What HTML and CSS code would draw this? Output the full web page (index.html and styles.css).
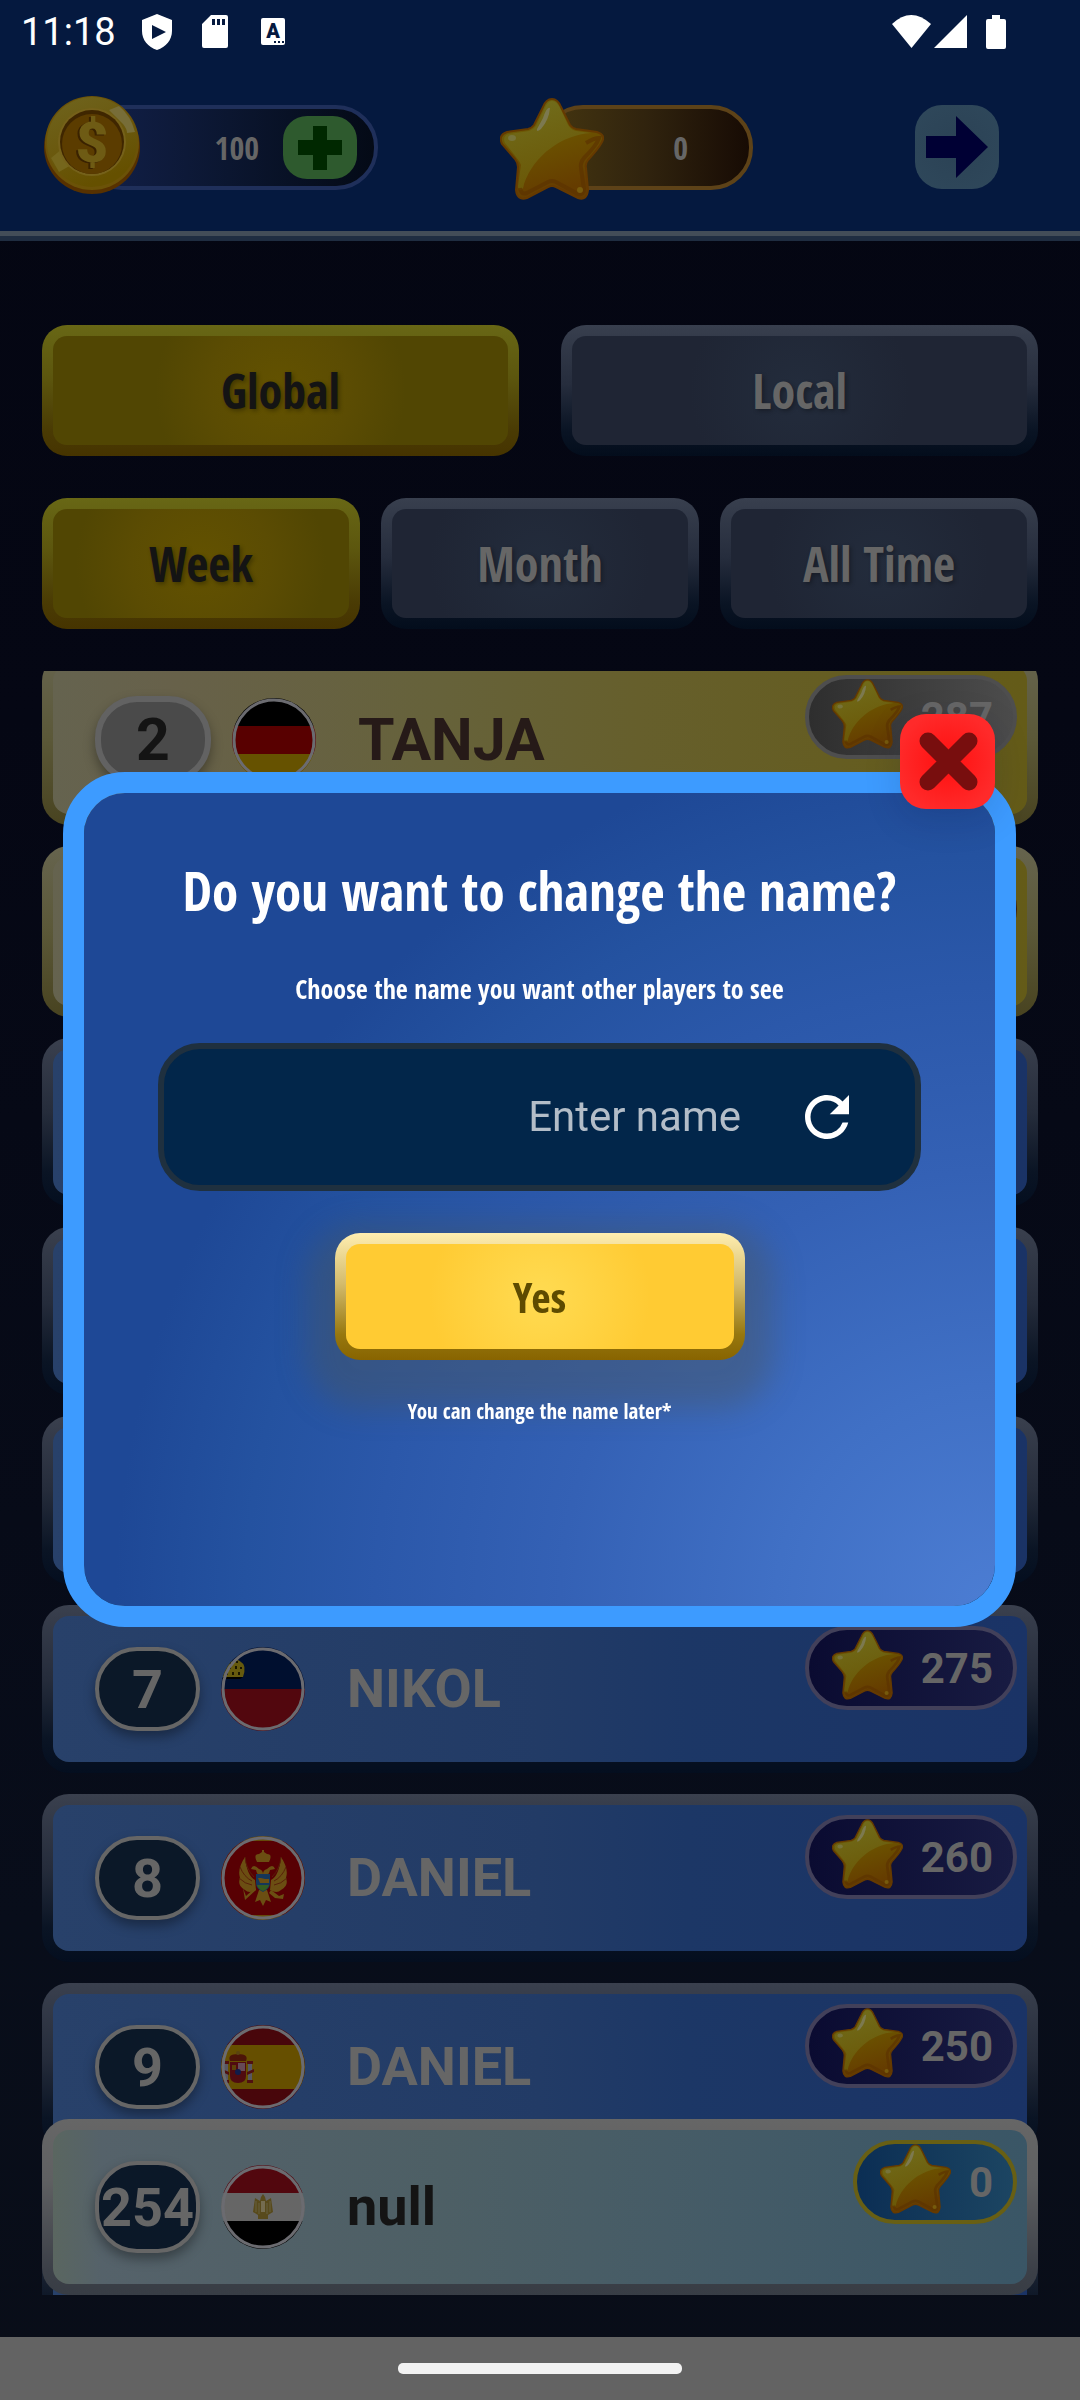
FILE: index.html
```html
<!DOCTYPE html>
<html lang="en">
<head>
<meta charset="utf-8">
<meta name="viewport" content="width=device-width, initial-scale=1">
<title>Leaderboard</title>
<link rel="stylesheet" href="styles.css">
</head>
<body>
<svg class="defs" width="0" height="0" aria-hidden="true">
  <defs>
    <linearGradient id="starBase" x1="0" y1="0" x2="0.3" y2="1">
      <stop offset="0" stop-color="#6e6812"/><stop offset="0.5" stop-color="#6b5200"/><stop offset="1" stop-color="#653c00"/>
    </linearGradient>
    <linearGradient id="starLight" x1="0.2" y1="0" x2="0.5" y2="1">
      <stop offset="0" stop-color="#716d1c"/><stop offset="1" stop-color="#6a5605"/>
    </linearGradient>
    <linearGradient id="coinRim" x1="0" y1="0" x2="0.4" y2="1">
      <stop offset="0" stop-color="#6f641e"/><stop offset="0.5" stop-color="#6b5a10"/><stop offset="1" stop-color="#655000"/>
    </linearGradient>
    <clipPath id="round"><circle cx="42" cy="42" r="42"/></clipPath>
    <symbol id="star" viewBox="0 0 104 102">
      <path d="M52 1C56 1 59 4 61 9L70 27Q72 30 76 31L97 34Q106 37 102 44Q99 50 88 62Q85 66 86 70L88 92Q87 103 78 100L56 89Q52 87 48 89L27 100Q17 103 16 92L18 69Q18 65 15 61L2 46Q-2 37 7 34L28 31Q32 30 34 27L43 9Q46 1 52 1Z" fill="url(#starBase)" stroke="#653900" stroke-width="2"/>
      <path d="M52 3C55 3 58 6 60 10L68 27Q71 32 76 33L91 35C62 37 34 57 24 86Q23 93 20 92Q18 92 18 88L21 67Q20 64 16 59L5 45Q2 38 9 36L29 33Q33 32 36 28L45 10Q48 3 52 3Z" fill="url(#starLight)"/>
      <path d="M86 45Q94 40 99 40Q97 47 84 60Q80 65 81 70L84 91Q84 97 78 96L56 84Q52 82 48 84L27 95Q21 97 20 90" fill="none" stroke="#5d3300" stroke-width="4" opacity="0.7"/>
      <path d="M50 10Q47 8 43 20L37 31Q36 35 41 31Q49 22 50 10Z" fill="#7c7950"/>
      <ellipse cx="12" cy="40" rx="4" ry="3" fill="#77733a"/>
      <circle cx="80" cy="92" r="3" fill="#765a0c"/>
    </symbol>
  </defs>
</svg>

<header class="top">
  <div class="status">
    <span class="clock">11:18</span>
    <svg class="status-shield" width="30" height="36" viewBox="0 0 30 36"><path fill="#fff" fill-rule="evenodd" d="M15 0L30 6V17C30 26 24 33 15 36C6 33 0 26 0 17V6ZM10 11V25L24 18Z"/></svg>
    <svg class="status-card" width="26" height="33" viewBox="0 0 26 33"><path fill="#fff" fill-rule="evenodd" d="M9 0H24Q26 0 26 2V31Q26 33 24 33H2Q0 33 0 31V9ZM10 4V10H13V4ZM15 4V10H18V4ZM20 4V10H23V4Z"/></svg>
    <svg class="status-a" width="24" height="27" viewBox="0 0 24 27"><rect width="24" height="27" rx="2" fill="#fff"/><text x="12" y="20" text-anchor="middle" class="glyph-a">A</text><path d="M13 23h2v2h-2zM17 23h2v2h-2zM21 23h2v2h-2z" fill="#05193f"/></svg>
    <svg class="status-right" width="114" height="34" viewBox="0 0 114 34" fill="#fff"><path d="M0 9Q19 -9 39 9L19.500 33Z"/><path d="M75 0V33H42Z"/><path d="M100 0h8v4h4q2 0 2 2v26q0 2-2 2h-16q-2 0-2-2V6q0-2 2-2h4z"/></svg>
  </div>
  <div class="hud">
    <div class="meter coins">
      <svg class="coin" width="98" height="98" viewBox="0 0 98 98">
        <ellipse cx="49" cy="51" rx="48" ry="47" fill="#573100"/>
        <circle cx="49" cy="47" r="47" fill="#6b5208"/>
        <circle cx="49" cy="46" r="45" fill="url(#coinRim)"/>
        <path d="M66 14L80 28Q84 33 84 37L92 36Q88 20 76 10Z" fill="#776d38"/>
        <path d="M8 62L16 76L30 68L20 52Z" fill="#75661c"/>
        <circle cx="49" cy="46" r="34" fill="#75611a"/>
        <circle cx="49" cy="46" r="32" fill="#3f2600"/>
        <circle cx="49" cy="48" r="30" fill="#5b3c00"/>
        <text x="47" y="67" text-anchor="middle" class="dollar-shade">$</text>
        <text x="49" y="66" text-anchor="middle" class="dollar">$</text>
      </svg>
      <span class="meter-value">100</span>
      <button class="add" type="button" aria-label="Add coins"><svg width="46" height="46" viewBox="0 0 46 46"><path d="M16 1h14v14h15v15H30v15H16V30H1V15h15z" fill="#002800"/></svg></button>
    </div>
    <div class="meter stars">
      <svg class="big-star" width="104" height="102"><use href="#star"/></svg>
      <span class="meter-value">0</span>
    </div>
    <button class="next" type="button" aria-label="Next"><svg width="62" height="62" viewBox="0 0 62 62"><path d="M0 20H30V0L62 31L30 62V42H0Z" fill="#000034"/></svg></button>
  </div>
</header>

<main class="board">
  <div class="tabs scope">
    <button class="tab active" type="button">Global</button>
    <button class="tab" type="button">Local</button>
  </div>
  <div class="tabs period">
    <button class="tab active" type="button">Week</button>
    <button class="tab" type="button">Month</button>
    <button class="tab" type="button">All Time</button>
  </div>

  <div class="ranking">
    <ol class="rows">
      <li class="row medal silver">
        <span class="rank">2</span>
        <svg class="flag" viewBox="0 0 84 84"><g clip-path="url(#round)"><rect width="84" height="28" fill="#000"/><rect y="28" width="84" height="28" fill="#580000"/><rect y="56" width="84" height="28" fill="#665200"/></g><circle class="ring" cx="42" cy="42" r="40"/></svg>
        <span class="name">TANJA</span>
        <span class="score"><svg class="mini-star"><use href="#star"/></svg>287</span>
      </li>
      <li class="row medal bronze"><span class="rank"></span><span class="score"></span></li>
      <li class="row"><span class="rank"></span></li>
      <li class="row"><span class="rank"></span></li>
      <li class="row"><span class="rank"></span></li>
      <li class="row">
        <span class="rank">7</span>
        <svg class="flag" viewBox="0 0 84 84"><g clip-path="url(#round)"><rect width="84" height="42" fill="#000f2f"/><rect y="42" width="84" height="42" fill="#52070e"/><path d="M0 18Q6 12 12 15Q16 11 20 15Q26 18 22 30H0Z" fill="#665a0e"/><path d="M3 20v2M9 19v3M15 19v3M20 20v2M6 25v3M12 25v3M18 25v3M9 15v2M16 14v2" stroke="#1a1600" stroke-width="2"/><path d="M0 30h22l-3 2H0z" fill="#000"/></g><circle class="ring" cx="42" cy="42" r="40"/></svg>
        <span class="name">NIKOL</span>
        <span class="score"><svg class="mini-star"><use href="#star"/></svg>275</span>
      </li>
      <li class="row">
        <span class="rank">8</span>
        <svg class="flag" viewBox="0 0 84 84"><g clip-path="url(#round)"><rect width="84" height="84" fill="#664a0a"/><rect y="5" width="84" height="74" fill="#580003"/>
          <g fill="#6b4e12"><path d="M36 26q-4-8 2-8l3-2v-2h2v2l3 2q6 0 2 8z"/><path d="M38 33q-6-6-8 0l5 1q1 6 7 6q6 0 7-6l5-1q-2-6-8 0q-4 1-4 5q0-4-4-5z"/><path d="M34 44Q26 40 24 21Q16 33 19 42Q16 50 24 54Q28 58 35 54ZM50 44Q58 40 60 21Q68 33 65 42Q68 50 60 54Q56 58 49 54Z"/><path d="M35 54L24 64L22 52L25 60L34 52ZM50 54L58 60L63 58L62 63L54 62L48 57Z"/><path d="M38 54h8l4 12l-5-2l-3 6l-3-6l-5 2z"/></g>
          <path d="M24 21q1 12 9 20M19 31q4 10 12 14M18 42q6 6 13 7M60 21q-1 12-9 20M65 31q-4 10-12 14M66 42q-6 6-13 7" stroke="#58200a" fill="none"/>
          <path d="M35 38h14v9q0 6-7 9q-7-3-7-9z" fill="#15365a"/><path d="M36 49h12q-1 4-6 6q-5-2-6-6z" fill="#345c20"/><path d="M37 42h3l4 1h4v4h-9z" fill="#6b4e12"/></g><circle class="ring" cx="42" cy="42" r="40"/></svg>
        <span class="name">DANIEL</span>
        <span class="score"><svg class="mini-star"><use href="#star"/></svg>260</span>
      </li>
      <li class="row">
        <span class="rank">9</span>
        <svg class="flag" viewBox="0 0 84 84"><g clip-path="url(#round)"><rect width="84" height="84" fill="#48060b"/><rect y="20" width="84" height="44" fill="#664f00"/><path d="M9 36q-3-7 8-7q11 0 8 7z" fill="#4c1408"/><circle cx="17" cy="28" r="2" fill="#5a4410"/><rect x="3" y="39" width="4" height="18" fill="#585862"/><rect x="27" y="39" width="4" height="18" fill="#585862"/><path d="M2 36h6v3H2zM26 36h6v3h-6zM1 44l7 3v3l-7-3zM33 44l-7 3v3l7-3zM2 55h6v3H2zM26 55h6v3h-6z" fill="#501010"/><path d="M9 37h16v14q0 7-8 7q-8 0-8-7z" fill="#500b10"/><rect x="17" y="38" width="7" height="8" fill="#664a56"/><rect x="11" y="40" width="4" height="5" fill="#5c4008"/><circle cx="17" cy="47" r="3" fill="#101c4a"/></g><circle class="ring" cx="42" cy="42" r="40"/></svg>
        <span class="name">DANIEL</span>
        <span class="score"><svg class="mini-star"><use href="#star"/></svg>250</span>
      </li>
      <li class="row"><span class="rank"></span></li>
    </ol>
    <div class="row own">
      <span class="rank">254</span>
      <svg class="flag" viewBox="0 0 84 84"><g clip-path="url(#round)"><rect width="84" height="28" fill="#52070e"/><rect y="28" width="84" height="28" fill="#666"/><rect y="56" width="84" height="28" fill="#000"/><path d="M34 33l5 3l1-4l2-3l2 3l1 4l5-3l2 14l-5 3v4H37v-4l-5-3z" fill="#584a1c"/><path d="M40 36h4v11h-4z" fill="#746c50"/><path d="M35 36v11M38 38v11M46 38v11M49 36v11" stroke="#666040"/></g><circle class="ring" cx="42" cy="42" r="40"/></svg>
      <span class="name">null</span>
      <span class="score"><svg class="mini-star"><use href="#star"/></svg>0</span>
    </div>
  </div>
</main>

<footer class="system-nav"><span class="handle"></span></footer>

<div class="backdrop">
  <form class="dialog" role="dialog" aria-labelledby="dialog-title">
    <button class="close" type="button" aria-label="Close"><svg width="60" height="60" viewBox="0 0 60 60"><path d="M10 10L51 51M51 10L10 51" stroke="#780e0e" stroke-width="17" stroke-linecap="round"/></svg></button>
    <h1 class="dialog-title" id="dialog-title">Do you want to change the name?</h1>
    <label class="dialog-text" for="player-name">Choose the name you want other players to see</label>
    <div class="field">
      <input class="field-input" id="player-name" type="text" placeholder="Enter name">
      <button class="refresh" type="button" aria-label="Random name"><svg width="66" height="66" viewBox="0 0 24 24"><path fill="#fff" d="M17.650 6.350A7.958 7.958 0 0 0 12 4c-4.420 0-7.990 3.580-7.990 8s3.570 8 7.990 8c3.730 0 6.840-2.550 7.730-6h-2.080A5.990 5.990 0 0 1 12 18c-3.310 0-6-2.690-6-6s2.690-6 6-6c1.660 0 3.140.690 4.220 1.780L13 11h7V4z"/></svg></button>
    </div>
    <button class="confirm" type="button">Yes</button>
    <p class="dialog-note">You can change the name later*</p>
  </form>
</div>
</body>
</html>
```
FILE: styles.css
```css
* { box-sizing: border-box; }

:root {
  --condensed: "Open Sans Condensed", "Noto Sans Condensed", "Open Sans", sans-serif;
  --body: Roboto, sans-serif;
}

body {
  margin: 0;
  height: 100vh;
  display: flex;
  flex-direction: column;
  overflow: hidden;
  background: linear-gradient(#040612, #050714 30%, #080d1a 80%, #090d18);
  font-family: var(--body);
}

button { padding: 0; border: 0; font: inherit; cursor: pointer; }
svg { display: block; }
.defs { position: absolute; }

/* Status bar and counters */
.top {
  background: #05193f;
  border-bottom: 5px solid #1f2d41;
  box-shadow: inset 0 -5px #434d58;
}
.status {
  height: 63px;
  padding: 0 74px 0 21px;
  display: flex;
  align-items: center;
}
.clock { width: 121px; font-size: 38px; line-height: 66px; color: #fff; }
.status-card { margin-left: 30px; }
.status-a { margin-left: 33px; }
.status-right { margin-left: auto; }
.glyph-a { font: 900 20px var(--body); fill: #05193f; }

.hud {
  padding: 42px 81px 46px 80px;
  display: flex;
}
.meter {
  position: relative;
  height: 85px;
  display: flex;
  align-items: center;
  justify-content: flex-end;
  border: 4px solid;
  border-radius: 42px;
}
.coins {
  width: 298px;
  padding-right: 17px;
  gap: 24px;
  border-color: #1f2f5a;
  background: linear-gradient(90deg, #12204a, #0b1630 50%, #040a16);
}
.stars {
  width: 212px;
  margin-left: 163px;
  padding-right: 61px;
  border-color: #5d4218;
  background: linear-gradient(90deg, #453610, #30230e 50%, #170b04);
}
.coin { position: absolute; left: -41px; top: -13px; }
.big-star { position: absolute; left: -45px; top: -11px; }
.dollar { font: 900 56px var(--body); fill: #6e5b14; }
.dollar-shade { font: 900 56px var(--body); fill: #3a2200; }
.meter-value {
  font-family: var(--condensed);
  font-weight: 700;
  font-size: 32px;
  color: #666;
}
.add {
  width: 74px;
  height: 63px;
  display: grid;
  place-items: center;
  border-radius: 24px;
  background: #2e5a2e;
}
.next {
  width: 84px;
  height: 84px;
  margin-left: auto;
  display: grid;
  place-items: center;
  border-radius: 27px;
  background: radial-gradient(#2b4255, #2f485b);
}

/* Tabs */
.board {
  flex: 1;
  min-height: 0;
  padding: 84px 42px 42px;
  display: flex;
  flex-direction: column;
  gap: 42px;
}
.tabs { display: grid; grid-auto-flow: column; grid-auto-columns: 1fr; }
.scope { gap: 42px; }
.period { gap: 21px; }
.tab {
  height: 131px;
  border: 11px solid transparent;
  border-radius: 25px;
  background:
    radial-gradient(circle at center, #232c3c, #1f2534 110px) padding-box,
    linear-gradient(#383f4e, #262d3d 45%, #0a1424 80%, #030d1c) border-box;
  color: #666;
  font-family: var(--condensed);
  font-weight: 700;
  font-size: 48px;
  text-shadow: 2px 2px 4px rgba(0, 0, 0, 0.3);
}
.tab.active {
  background:
    radial-gradient(circle at center, #635200, #5b4c03 70px, #514603 125px) padding-box,
    linear-gradient(#686715, #5c560e 40%, #4a3b04 80%, #463400) border-box;
  color: #141414;
}

/* Ranking list */
.ranking {
  position: relative;
  flex: 1;
  min-height: 0;
  overflow: hidden;
}
.rows {
  list-style: none;
  margin: -17px 0 0;
  padding: 0;
  display: flex;
  flex-direction: column;
  gap: 21px;
}
.row {
  position: relative;
  display: flex;
  align-items: center;
  padding: 31px 42px;
  border: 11px solid transparent;
  border-radius: 27px;
  background:
    linear-gradient(90deg, #28416a, #223b66 50%, #1c3766 65%, #1a3366) padding-box,
    linear-gradient(#3a404e, #252c3b 45%, #0a1424 80%, #040e1f) border-box;
  color: #666;
  font-weight: 700;
  font-size: 54px;
}
.rank {
  width: 105px;
  height: 84px;
  display: flex;
  align-items: center;
  justify-content: center;
  border: 4px solid #666;
  border-radius: 42px;
  background: #0b1828;
  box-shadow: 0 6px 12px rgba(0, 0, 0, 0.35);
}
.flag {
  width: 84px;
  height: 84px;
  margin: 0 42px 0 21px;
}
.ring { fill: none; stroke: #6b6b70; stroke-width: 3; }
.name { line-height: 84px; }
.score {
  position: absolute;
  top: 10px;
  right: 10px;
  height: 84px;
  padding: 0 20px 0 23px;
  display: flex;
  align-items: center;
  gap: 18px;
  border: 4px solid #42405a;
  border-radius: 42px;
  background: linear-gradient(90deg, #0a0b31, #181b42);
  font-size: 42px;
}
.mini-star { width: 71px; height: 70px; margin-bottom: 6px; }

.medal {
  font-size: 59px;
  color: #261a18;
  background:
    linear-gradient(90deg, #65634f, #67614a 12%, #66623a 40%, #665f2c 60%, #645b18) padding-box,
    linear-gradient(#66644e, #5b5838 50%, #484320) border-box;
}
.medal .rank {
  width: 116px;
  height: 87px;
  border: 6px solid #626262;
  background: #4a4a4a;
  color: #141414;
}
.silver .score {
  border-color: #4e4e4e;
  background: linear-gradient(90deg, #2e2e2e, #4c4c4c);
  color: #666;
}
.bronze .score { width: 214px; border-color: #3a2010; background: #2c180c; }

.own {
  position: absolute;
  left: 0;
  right: 0;
  bottom: 0;
  background:
    linear-gradient(90deg, #5a6660, #55626a 5%, #4d5f65 40%, #445b67 70%, #3a5666) padding-box,
    linear-gradient(#666, #5f6062 35%, #3c4048 85%, #383d45) border-box;
}
.own .rank { height: 92px; }
.own .name { color: #141414; }
.own .score { border-color: #685f14; background: linear-gradient(90deg, #0b2e54, #1c4562); }

.system-nav {
  height: 63px;
  display: grid;
  place-items: center;
  background: #636363;
}
.handle {
  width: 284px;
  height: 11px;
  border-radius: 5px;
  background: #f2f2f2;
}

/* Rename dialog */
.backdrop {
  position: fixed;
  inset: 0;
  padding: 0 64px 2px 63px;
  display: flex;
  align-items: center;
}
.dialog {
  position: relative;
  width: 100%;
  padding: 62px 74px 180px;
  display: flex;
  flex-direction: column;
  align-items: center;
  border: 21px solid #3d9bff;
  border-radius: 62px;
  background: radial-gradient(circle at 100% 100%, #4c7dd3, #4070c5 220px, #3461b5 435px, #2b58aa 620px, #2452a0 750px, #1e4896 880px) padding-box;
  color: #fff;
  font-family: var(--condensed);
  font-weight: 700;
}
.close {
  position: absolute;
  top: -79px;
  right: 0;
  width: 95px;
  height: 95px;
  display: grid;
  place-items: center;
  border-radius: 26px;
  background: radial-gradient(#ff0f0f, #ff2a2a 75%);
  box-shadow: 0 10px 36px rgba(0, 20, 60, 0.15);
}
.dialog-title { margin: 0; font-size: 53px; line-height: 72px; }
.dialog-text { margin-top: 45px; font-size: 26px; line-height: 35px; }
.field {
  width: 100%;
  height: 148px;
  margin-top: 36px;
  padding: 0 55px 0 40px;
  display: flex;
  align-items: center;
  gap: 53px;
  border: 6px solid #1f303f;
  border-radius: 42px;
  background: #02264a;
}
.field-input {
  flex: 1;
  min-width: 0;
  padding: 0;
  border: 0;
  outline: 0;
  background: none;
  color: #fff;
  text-align: right;
  font-family: var(--body);
  font-size: 42px;
}
.field-input::placeholder { color: #b3bdc8; opacity: 1; }
.refresh { background: none; }
.confirm {
  width: 410px;
  height: 127px;
  margin-top: 42px;
  border: 11px solid transparent;
  border-radius: 25px;
  background:
    radial-gradient(circle at center, #ffdb52, #ffcb33 110px) padding-box,
    linear-gradient(#ffeeb0, #d3bb6c 40%, #96770f 80%, #886400) border-box;
  box-shadow: 0 20px 30px 28px rgba(76, 84, 88, 0.4);
  color: #5e4b00;
  font-size: 42px;
  font-weight: 700;
}
.dialog-note { position: relative; margin: 37px 0 0; font-size: 21px; line-height: 29px; }
```
